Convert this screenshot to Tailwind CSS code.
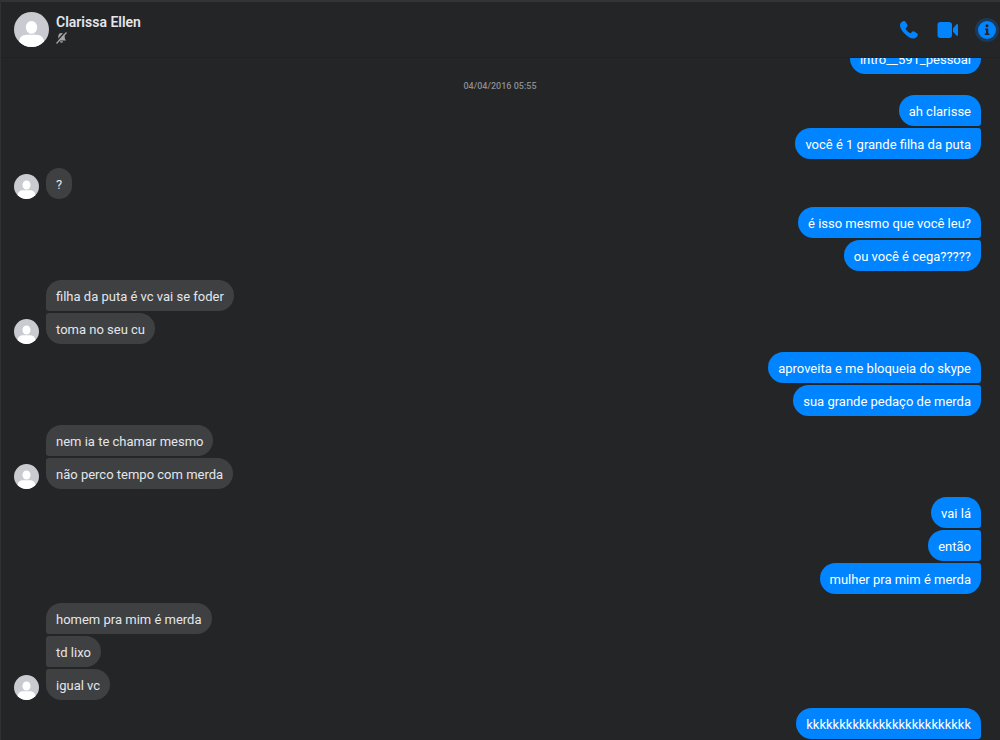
<!DOCTYPE html>
<html lang="pt-BR">
<head>
    <meta charset="UTF-8">
    <meta name="viewport" content="width=device-width, initial-scale=1.0">
    <title>Clarissa Ellen</title>
    <script src="https://cdn.jsdelivr.net/npm/@tailwindcss/browser@4"></script>
</head>
<body class="bg-[#242527] font-['Roboto','Open_Sans',sans-serif] text-[13px] leading-[17px] text-[#e4e6eb]">

    <!-- shared avatar -->
    <svg class="hidden" aria-hidden="true">
        <symbol id="avatar" viewBox="0 0 36 36">
            <rect width="36" height="36" fill="#c9cbd1"/>
            <ellipse cx="18" cy="15.8" rx="5.800" ry="6.600" fill="#fff"/>
            <path d="M5 36v-4.500c0-5 3.500-8 8-8h10c4.500 0 8 3 8 8V36z" fill="#fff"/>
        </symbol>
    </svg>

    <div class="h-screen flex flex-col border-l border-[#303133]">
        <header class="h-[58px] shrink-0 flex items-center justify-between border-t-2 border-b border-t-[#333437] border-b-[#202123] pl-[13px] pr-px">
            <div class="flex gap-[7px]">
                <svg class="size-[35px] rounded-full"><use href="#avatar"/></svg>
                <div>
                    <h1 class="text-sm leading-5 font-semibold">Clarissa Ellen</h1>
                    <svg class="w-[11px] h-3" viewBox="0 0 11 12" role="img" aria-label="Silenciado">
                        <path d="M5.500 1C3.300 1 2.300 2.600 2.300 4.500c0 2-.5 3-1.300 4h9C9.200 7.500 8.700 6.500 8.700 4.500 8.700 2.600 7.700 1 5.500 1zM4 9.200a1.500 1.500 0 0 0 3 0z" fill="#a4a6aa"/>
                        <path d="M0 10L9 0" stroke="#242527" stroke-width="1.500"/>
                        <path d="M.5 11.500L10.500.5" stroke="#a4a6aa" stroke-width="1.200"/>
                    </svg>
                </div>
            </div>
            <div class="flex items-center gap-[15px] text-[#0084ff]">
                <button type="button" aria-label="Ligar">
                    <svg class="size-6" viewBox="0 0 24 24" fill="currentColor"><path d="M6.200 3.300c.8-.5 1.800-.3 2.300.5l1.700 2.800c.5.8.3 1.700-.3 2.300l-1 1c-.3.3-.3.7-.1 1.100.8 1.600 2.300 3.100 4 4 .4.200.8.200 1.100-.1l1-1c.6-.6 1.500-.8 2.300-.3l2.800 1.700c.8.5 1 1.500.5 2.300-.7 1.600-2 3-4 3-2.800 0-6.300-2-9-5C4.800 12.900 3 9.700 3 7.200c0-2 1.500-3.300 3.200-3.900z"/></svg>
                </button>
                <button type="button" aria-label="Chamada de vídeo">
                    <svg class="size-6" viewBox="0 0 24 24" fill="currentColor"><rect x="1.500" y="4" width="14.500" height="16" rx="3"/><path d="M17 10.300l3.600-4c.5-.5 1.400-.2 1.400.6v10.200c0 .8-.9 1.100-1.400.6l-3.600-4z"/></svg>
                </button>
                <button type="button" aria-label="Informações">
                    <svg class="size-6" viewBox="0 0 24 24"><circle cx="12" cy="12" r="12" fill="#1b3a5a"/><circle cx="12" cy="12" r="9" fill="#0084ff"/><circle cx="12" cy="7.800" r="1.500" fill="#242527"/><path d="M10 10.500h3.200v5h1.200v1.500H9.800v-1.500H11V12h-1z" fill="#242527"/></svg>
                </button>
            </div>
        </header>

        <main class="flex-1 min-h-0 overflow-hidden flex flex-col justify-end pl-[13px] pr-[19px] pb-px">
            <div class="flex flex-col items-end">
                <p class="bg-[#0084ff] text-white rounded-2xl px-[10px] pt-2 pb-[6px]">intro__591_pessoal</p>
            </div>
            <time class="h-[21px] pt-[4px] pl-[5px] text-center text-[9px] font-medium text-[#8b8d91]">04/04/2016 05:55</time>
            <div class="flex flex-col items-end gap-[2px]">
                <p class="bg-[#0084ff] text-white rounded-2xl rounded-br-[3px] px-[10px] pt-2 pb-[6px]">ah clarisse</p>
                <p class="bg-[#0084ff] text-white rounded-2xl rounded-tr-[3px] px-[10px] pt-2 pb-[6px]">você é 1 grande filha da puta</p>
            </div>
            <div class="mt-[9px] flex items-end gap-[7px]">
                <svg class="size-[25px] rounded-full"><use href="#avatar"/></svg>
                <div class="flex flex-col items-start gap-[2px]">
                    <p class="bg-[#3e4042] rounded-2xl px-[10px] pt-2 pb-[6px]">?</p>
                </div>
            </div>
            <div class="mt-2 flex flex-col items-end gap-[2px]">
                <p class="bg-[#0084ff] text-white rounded-2xl rounded-br-[3px] px-[10px] pt-2 pb-[6px]">é isso mesmo que você leu?</p>
                <p class="bg-[#0084ff] text-white rounded-2xl rounded-tr-[3px] px-[10px] pt-2 pb-[6px]">ou você é cega?????</p>
            </div>
            <div class="mt-[9px] flex items-end gap-[7px]">
                <svg class="size-[25px] rounded-full"><use href="#avatar"/></svg>
                <div class="flex flex-col items-start gap-[2px]">
                    <p class="bg-[#3e4042] rounded-2xl rounded-bl-[3px] px-[10px] pt-2 pb-[6px]">filha da puta é vc vai se foder</p>
                    <p class="bg-[#3e4042] rounded-2xl rounded-tl-[3px] px-[10px] pt-2 pb-[6px]">toma no seu cu</p>
                </div>
            </div>
            <div class="mt-2 flex flex-col items-end gap-[2px]">
                <p class="bg-[#0084ff] text-white rounded-2xl rounded-br-[3px] px-[10px] pt-2 pb-[6px]">aproveita e me bloqueia do skype</p>
                <p class="bg-[#0084ff] text-white rounded-2xl rounded-tr-[3px] px-[10px] pt-2 pb-[6px]">sua grande pedaço de merda</p>
            </div>
            <div class="mt-[9px] flex items-end gap-[7px]">
                <svg class="size-[25px] rounded-full"><use href="#avatar"/></svg>
                <div class="flex flex-col items-start gap-[2px]">
                    <p class="bg-[#3e4042] rounded-2xl rounded-bl-[3px] px-[10px] pt-2 pb-[6px]">nem ia te chamar mesmo</p>
                    <p class="bg-[#3e4042] rounded-2xl rounded-tl-[3px] px-[10px] pt-2 pb-[6px]">não perco tempo com merda</p>
                </div>
            </div>
            <div class="mt-2 flex flex-col items-end gap-[2px]">
                <p class="bg-[#0084ff] text-white rounded-2xl rounded-br-[3px] px-[10px] pt-2 pb-[6px]">vai lá</p>
                <p class="bg-[#0084ff] text-white rounded-2xl rounded-r-[3px] px-[10px] pt-2 pb-[6px]">então</p>
                <p class="bg-[#0084ff] text-white rounded-2xl rounded-tr-[3px] px-[10px] pt-2 pb-[6px]">mulher pra mim é merda</p>
            </div>
            <div class="mt-[9px] flex items-end gap-[7px]">
                <svg class="size-[25px] rounded-full"><use href="#avatar"/></svg>
                <div class="flex flex-col items-start gap-[2px]">
                    <p class="bg-[#3e4042] rounded-2xl rounded-bl-[3px] px-[10px] pt-2 pb-[6px]">homem pra mim é merda</p>
                    <p class="bg-[#3e4042] rounded-2xl rounded-l-[3px] px-[10px] pt-2 pb-[6px]">td lixo</p>
                    <p class="bg-[#3e4042] rounded-2xl rounded-tl-[3px] px-[10px] pt-2 pb-[6px]">igual vc</p>
                </div>
            </div>
            <div class="mt-2 flex flex-col items-end gap-[2px]">
                <p class="bg-[#0084ff] text-white rounded-2xl rounded-br-[3px] px-[10px] pt-2 pb-[6px]">kkkkkkkkkkkkkkkkkkkkkkkkk</p>
            </div>
        </main>
    </div>

</body>
</html>
